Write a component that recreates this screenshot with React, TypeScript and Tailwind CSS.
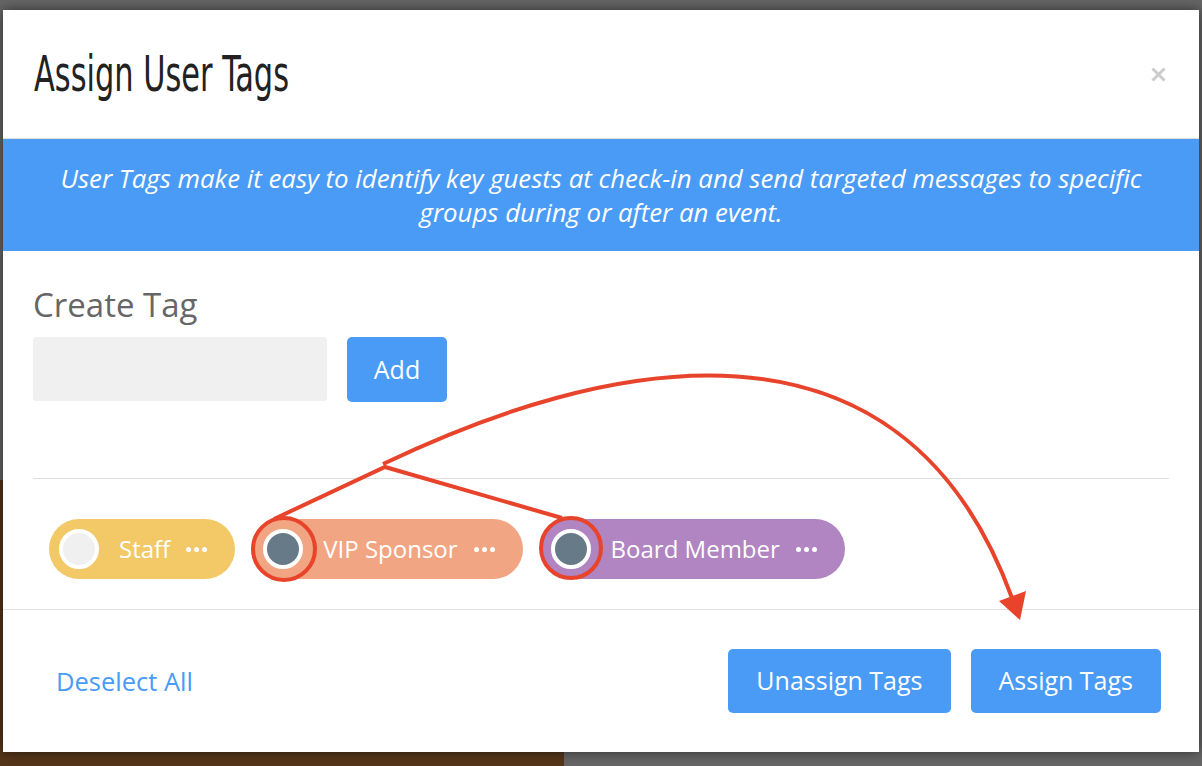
import React from 'react';

const tags = [
  { id: 1, label: 'Staff', bg: 'bg-[#f2c966]', dot: 'bg-[#f0f0f0]' },
  { id: 2, label: 'VIP Sponsor', bg: 'bg-[#f2a582]', dot: 'bg-[#667a88]' },
  { id: 3, label: 'Board Member', bg: 'bg-[#b085c1]', dot: 'bg-[#667a88]' },
];

function TagPill({ label, bg, dot }: { label: string; bg: string; dot: string }) {
  return (
    <div className={`flex h-[60px] items-center rounded-full pl-[10px] pr-[28px] ${bg}`}>
      <span className={`h-[40px] w-[40px] shrink-0 rounded-full border-[4px] border-white ${dot}`} />
      <span className="ml-[20px] text-[24px] leading-none text-white">{label}</span>
      <span className="ml-[16px] flex gap-[3px]">
        <span className="h-[5px] w-[5px] rounded-full bg-white" />
        <span className="h-[5px] w-[5px] rounded-full bg-white" />
        <span className="h-[5px] w-[5px] rounded-full bg-white" />
      </span>
    </div>
  );
}

export default function App() {
  return (
    <div className="relative h-[766px] w-[1202px] overflow-hidden bg-[#666666] font-['Open_Sans',sans-serif]">
      {/* page behind the modal */}
      <div className="flex h-full flex-col justify-end">
        <div className="h-[286px] w-[564px] bg-[#55361a]" />
      </div>

      {/* modal */}
      <div className="absolute left-[3px] top-[10px] flex h-[742px] w-[1196px] flex-col bg-white shadow-[0_0_12px_rgba(0,0,0,0.55)]">
        <div className="flex h-[129px] items-center justify-between border-b border-[#dedede] pl-[31px] pr-[33px]">
          <h1 className="inline-block origin-left scale-x-[0.69] font-['DejaVu_Sans_Condensed',sans-serif] text-[49px] font-extralight leading-none text-[#222]">
            Assign User Tags
          </h1>
          <svg width="15" height="15" viewBox="0 0 15 15" className="text-[#cccccc]">
            <path d="M1.5 1.5 L13.5 13.5 M13.5 1.5 L1.5 13.5" stroke="currentColor" strokeWidth="3" />
          </svg>
        </div>

        <div className="flex h-[112px] items-center justify-center bg-[#4a9bf5] px-[30px] text-center text-[25.8px] leading-[34px] text-white italic">
          <p>
            User Tags make it easy to identify key guests at check-in and send targeted messages to specific
            <br />
            groups during or after an event.
          </p>
        </div>

        <div className="px-[30px] pb-[30px]">
          <h2 className="mt-[32px] text-[33px] leading-[44px] text-[#666]">Create Tag</h2>
          <div className="mt-[10px] flex">
            <input className="h-[64px] w-[294px] rounded-[3px] bg-[#f0f0f0] px-3 outline-none" />
            <button className="ml-[20px] h-[65px] w-[100px] rounded-[5px] bg-[#4a9bf5] text-[25px] text-white">Add</button>
          </div>
          <div className="mt-[76px] border-t border-[#dedede]" />
          <div className="mt-[40px] flex gap-[18px] pl-[16px]">
            {tags.map((t) => (
              <TagPill key={t.id} label={t.label} bg={t.bg} dot={t.dot} />
            ))}
          </div>
        </div>

        <div className="flex h-[143px] items-center justify-between border-t border-[#e2e2e2] pl-[53px] pr-[38px]">
          <button className="text-[25.5px] text-[#4a9bf5]">Deselect All</button>
          <div className="flex gap-[20px]">
            <button className="h-[64px] rounded-[5px] bg-[#4a9bf5] px-[28px] text-[25px] text-white">Unassign Tags</button>
            <button className="h-[64px] rounded-[5px] bg-[#4a9bf5] px-[28px] text-[25px] text-white">Assign Tags</button>
          </div>
        </div>
      </div>

      {/* red annotation */}
      <svg className="pointer-events-none absolute inset-0" width="1202" height="766" viewBox="0 0 1202 766">
        <g fill="none" stroke="#e8432b" strokeWidth="4">
          <circle cx="284" cy="549" r="31" />
          <circle cx="571" cy="548" r="30" />
          <path d="M274 519 L385 467 L562 518" />
          <path d="M383 464 C600 360 900 290 1012 598" />
        </g>
        <polygon points="1020,620 999,601 1026,591" fill="#e8432b" />
      </svg>
    </div>
  );
}
